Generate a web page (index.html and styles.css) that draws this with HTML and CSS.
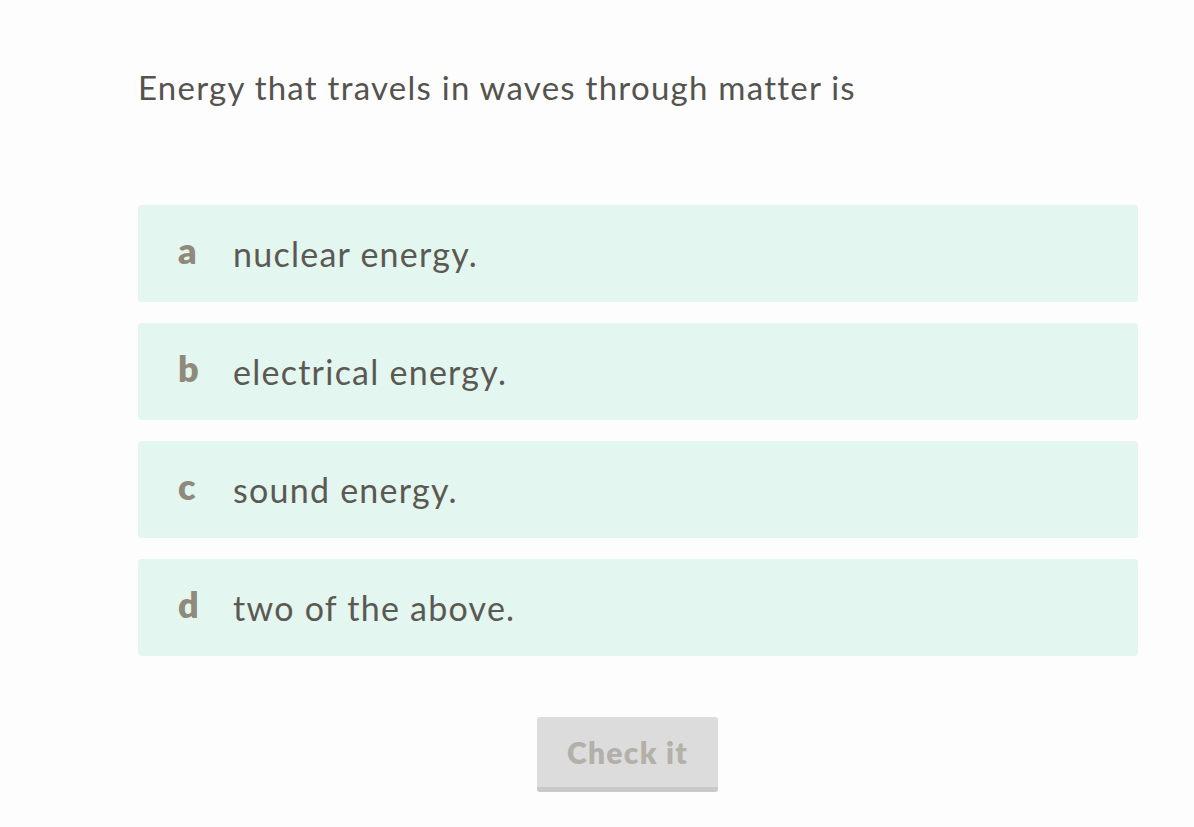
FILE: index.html
```html
<!DOCTYPE html>
<html lang="en">
<head>
    <meta charset="UTF-8">
    <meta name="viewport" content="width=device-width, initial-scale=1.0">
    <title>Quiz</title>
    <link rel="stylesheet" href="styles.css">
</head>
<body>

    <div class="quiz">
        <p class="question">Energy that travels in waves through matter is</p>

        <div class="choices">
            <div class="choice">
                <span class="choice-letter">a</span>
                <span class="choice-text">nuclear energy.</span>
            </div>
            <div class="choice">
                <span class="choice-letter">b</span>
                <span class="choice-text">electrical energy.</span>
            </div>
            <div class="choice">
                <span class="choice-letter">c</span>
                <span class="choice-text">sound energy.</span>
            </div>
            <div class="choice">
                <span class="choice-letter">d</span>
                <span class="choice-text">two of the above.</span>
            </div>
        </div>

        <div class="actions">
            <button class="check-btn" disabled>Check it</button>
        </div>
    </div>

</body>
</html>
```

FILE: styles.css
```css
* {
    box-sizing: border-box;
}

html, body {
    margin: 0;
    padding: 0;
    background-color: #fdfdfd;
    font-family: "Lato", "Open Sans", Arial, sans-serif;
}

.quiz {
    width: 1000px;
    margin: 0 0 0 138px;
    padding-top: 64px;
}

.question {
    margin: 0;
    font-size: 33px;
    line-height: 46px;
    letter-spacing: 1.25px;
    color: #55534d;
}

.choices {
    margin-top: 95px;
    display: flex;
    flex-direction: column;
    gap: 21px;
}

.choice {
    display: flex;
    align-items: center;
    height: 97px;
    padding-left: 40px;
    background-color: #e3f6ef;
    border-radius: 4px;
}

.choice-letter {
    width: 55px;
    font-size: 36px;
    font-weight: 800;
    color: #8f8a7c;
    margin-top: -7px;
}

.choice-text {
    font-size: 34px;
    letter-spacing: 1.25px;
    color: #5b5953;
}

.actions {
    margin-top: 61px;
    display: flex;
    justify-content: center;
    padding-right: 21px;
}

.check-btn {
    width: 181px;
    height: 75px;
    border: none;
    border-bottom: 5px solid #c9c9c9;
    border-radius: 3px;
    background-color: #dcdcdc;
    color: #b3b0aa;
    font-family: inherit;
    font-size: 30px;
    font-weight: 800;
    letter-spacing: 1.3px;
}
```
